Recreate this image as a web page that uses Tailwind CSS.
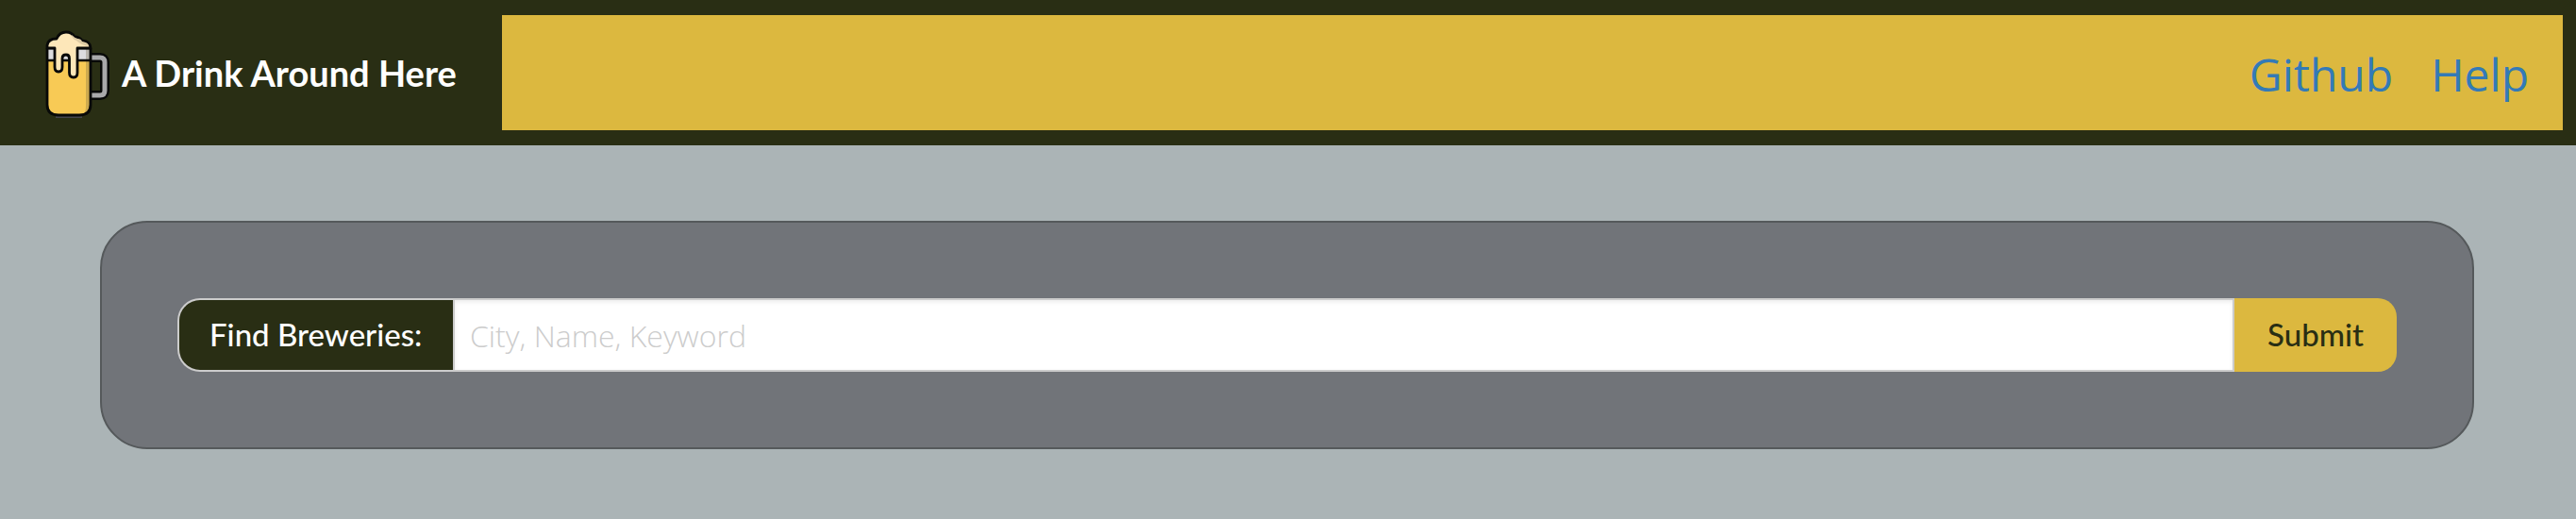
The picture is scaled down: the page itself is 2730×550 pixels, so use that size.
<!DOCTYPE html>
<html lang="en">
<head>
<meta charset="utf-8">
<title>A Drink Around Here</title>
<script src="https://cdn.jsdelivr.net/npm/@tailwindcss/browser@4"></script>
</head>
<body class="min-h-screen bg-[#abb4b6] font-['Open_Sans',sans-serif]">
<header class="flex h-[154px] items-stretch bg-[#292e14] py-4 pr-[14px]">
  <a href="#" class="flex w-[532px] shrink-0 items-center pl-12 text-white">
    <svg class="mt-1 h-[94px] w-[69px] shrink-0" viewBox="0 0 69 94" fill="none" aria-hidden="true">
      <path d="M49 29H58Q63 29 63 34V64Q63 69 58 69H49" stroke="#080908" stroke-width="10"/>
      <path d="M48 29H58Q63 29 63 34V64Q63 69 58 69H48" stroke="#a9a9ab" stroke-width="5"/>
      <path d="M11 92H39" stroke="#45464c" stroke-width="2"/>
      <path d="M2 19H48V79Q48 90 36 90H14Q2 90 2 79Z" fill="#f8ca55"/>
      <path d="M2 19H48V32H2Z" fill="#dcdcde"/>
      <path d="M43 19H48V79Q48 86 41 89Q43 86 43 80Z" fill="#6b6040" fill-opacity=".3"/>
      <path d="M2 32H48M2 19H48" stroke="#080908" stroke-width="2.6"/>
      <path d="M2 19V79Q2 90 14 90H36Q48 90 48 79V19" stroke="#080908" stroke-width="2.8"/>
      <path d="M2 19V16Q3 9 12 9Q15 2 22 2Q28 2 31 7Q36 7 39 11Q48 12 48 19H34V45Q34 50 30 50Q25.500 50 25.500 45V30Q25.500 26 22 26Q18 26 18 30V39Q18 44 14 44Q10 44 10 39V19Z" fill="#fde7b9" stroke="#080908" stroke-width="2.800" stroke-linejoin="round"/>
      <path d="M28 5Q31 8 34 9Q38 9 39 12Q46 13 46 17Q38 16 33 11Q28 9 28 5Z" fill="#decba4"/>
    </svg>
    <span class="ml-3 whitespace-nowrap font-['Lato',sans-serif] text-[38px] font-bold leading-10">A Drink Around Here</span>
  </a>
  <nav class="flex flex-1 items-center justify-end gap-10 bg-[#dcb83f] pr-9 pt-1 text-5xl font-normal text-[#337ab7]">
    <a href="#">Github</a>
    <a href="#">Help</a>
  </nav>
</header>
<main class="pt-20 pr-[108px] pl-[106px]">
  <form class="flex rounded-[50px] border-2 border-[#55595b] bg-[#717479] p-20">
    <label for="search" class="flex h-[78px] w-[292px] shrink-0 items-center rounded-l-3xl border-2 border-r-0 border-[#ccc] bg-[#292e14] pl-8 font-['Lato',sans-serif] text-[33px] font-medium text-white whitespace-nowrap">Find Breweries:</label>
    <input id="search" type="text" placeholder="City, Name, Keyword" class="h-[78px] min-w-0 flex-1 border-2 border-[#ccc] bg-white px-4 text-[32px] font-light text-[#555] shadow-[inset_0_2px_4px_rgba(0,0,0,0.08)] outline-none placeholder:text-[#ccc]">
    <button type="submit" class="h-[78px] w-[172px] shrink-0 rounded-r-[20px] bg-[#dcb83f] font-['Lato',sans-serif] text-[33px] font-medium text-[#292e14]">Submit</button>
  </form>
</main>
</body>
</html>
